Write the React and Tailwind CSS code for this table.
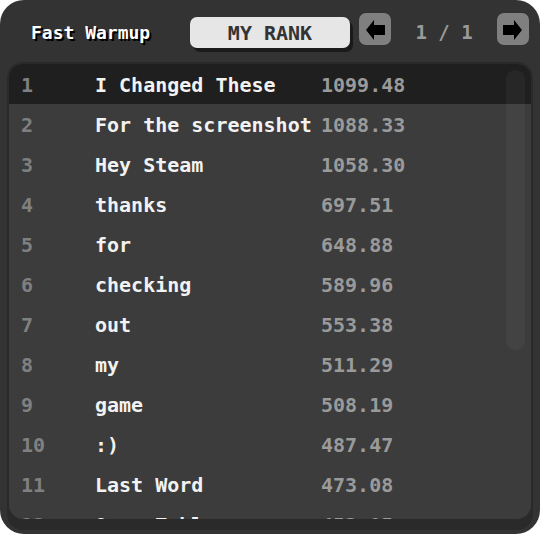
import React from 'react';

// 리더보드 데이터
const rows = [
  { rank: 1, name: 'I Changed These', score: '1099.48' },
  { rank: 2, name: 'For the screenshot', score: '1088.33' },
  { rank: 3, name: 'Hey Steam', score: '1058.30' },
  { rank: 4, name: 'thanks', score: '697.51' },
  { rank: 5, name: 'for', score: '648.88' },
  { rank: 6, name: 'checking', score: '589.96' },
  { rank: 7, name: 'out', score: '553.38' },
  { rank: 8, name: 'my', score: '511.29' },
  { rank: 9, name: 'game', score: '508.19' },
  { rank: 10, name: ':)', score: '487.47' },
  { rank: 11, name: 'Last Word', score: '473.08' },
  { rank: 12, name: 'Open Table', score: '452.05' },
];

const MONO = "font-['DejaVu_Sans_Mono',monospace]";

function ArrowButton({ dir }) {
  const points = dir === 'left'
    ? '7,17 15,7 15,12 26,12 26,22 15,22 15,27'
    : '25,17 17,7 17,12 6,12 6,22 17,22 17,27';
  return (
    <button className="w-[32px] h-[32px] rounded-[7px] bg-[#7f7f7f] shrink-0">
      <svg width="32" height="32" viewBox="0 0 32 32">
        <polygon points={points} fill="#000" />
      </svg>
    </button>
  );
}

export default function App() {
  return (
    <div className={`w-[540px] h-[534px] bg-white ${MONO}`}>
      <div className="h-full rounded-[24px] bg-[#333333] px-[9px] flex flex-col overflow-hidden">
        {/* 상단 헤더 */}
        <div className="h-[64px] flex items-center shrink-0 pt-[1px]">
          <div className="w-[181px] pl-[22px] text-[18px] font-bold text-white [text-shadow:2px_2px_0_#000]">
            Fast Warmup
          </div>
          <button className="w-[160px] h-[31px] rounded-[7px] bg-[#e6e6e6] text-[#333] text-[20px] font-bold shadow-[3px_4px_0_#1a1a1a] shrink-0">
            MY RANK
          </button>
          <div className="ml-[9px]"><ArrowButton dir="left" /></div>
          <div className="flex-1 text-center text-[19px] font-bold text-[#9a9a9a]">1 / 1</div>
          <div className="mr-[2px]"><ArrowButton dir="right" /></div>
        </div>

        {/* 랭킹 리스트 */}
        <div className="relative h-[455px] rounded-[14px] bg-[#3c3c3c] overflow-hidden shrink-0 shadow-[0_0_0_2px_#2a2a2a,0_9px_0_2px_#2a2a2a]">
          {rows.map((r, i) => (
            <div
              key={r.rank}
              className={`h-[40px] pt-[2px] flex items-center text-[20px] font-bold ${i === 0 ? 'bg-[#1f1f1f]' : ''}`}
            >
              <div className="w-[86px] pl-[12px] text-[#808080]">{r.rank}</div>
              <div className="w-[226px] text-[#f2f2f2] whitespace-nowrap">{r.name}</div>
              <div className="text-[#9a9a9a]">{r.score}</div>
            </div>
          ))}
          {/* 스크롤바 */}
          <div className="absolute right-[6px] top-[6px] w-[19px] h-[280px] rounded-[9px] bg-white/[0.04]" />
        </div>
      </div>
    </div>
  );
}
